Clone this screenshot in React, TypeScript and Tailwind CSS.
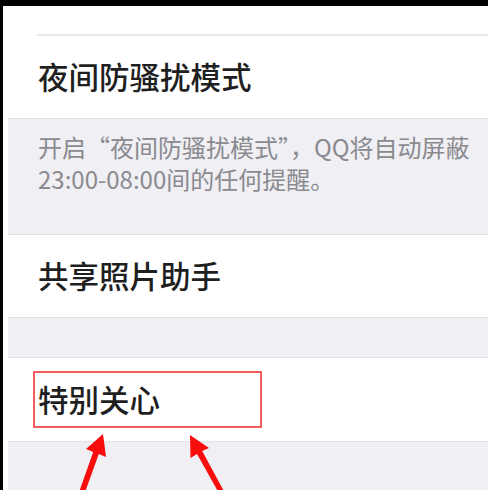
import React from "react";

const App = () => {
  return (
    <div className="relative w-[488px] h-[490px] overflow-hidden bg-black font-['Noto_Sans_CJK_SC','Noto_Sans',sans-serif]">
      <div className="mt-[6px] ml-[3px] h-[484px] bg-white flex flex-col">
        <div className="h-[28px] shrink-0" />
        <div className="ml-[34px] h-[2px] shrink-0 bg-[#e8e8ea]" />
        <div className="h-[82px] shrink-0 flex items-center pl-[35px] text-[30.5px] font-medium text-[#1f1f1f]">
          夜间防骚扰模式
        </div>

        <div className="ml-[5px] h-[117px] shrink-0 bg-[#efeff4] border-t border-b border-[#e2e2e6] pl-[30px] pt-[12px] text-[24px] leading-[32px] text-[#8a8a8f] whitespace-nowrap">
          <div>开启“夜间防骚扰模式”，QQ将自动屏蔽</div>
          <div>23:00-08:00间的任何提醒。</div>
        </div>

        <div className="h-[82px] shrink-0 flex items-center pl-[35px] text-[30.5px] font-medium text-[#1f1f1f]">
          共享照片助手
        </div>

        <div className="ml-[5px] h-[41px] shrink-0 bg-[#efeff4] border-t border-b border-[#e2e2e6]" />

        <div className="h-[83px] shrink-0 flex items-center pl-[30px]">
          <div className="w-[229px] h-[57px] border-2 border-solid border-[#f25c5c] flex items-center pl-[3px] text-[30.5px] font-medium text-[#1f1f1f]">
            特别关心
          </div>
        </div>

        <div className="ml-[5px] flex-1 bg-[#efeff4] border-t border-[#e2e2e6]" />
      </div>

      {/* annotation arrows */}
      <svg className="absolute top-0 left-0 pointer-events-none" width="488" height="490" viewBox="0 0 488 490">
        <polygon
          points="103,434 106,457 98.8,454 84,495 78,495 93.2,452 86,449"
          fill="#f80d0d"
        />
        <polygon
          points="190,435 209,448 202.2,451 226,495 220,495 197,454 190.5,458"
          fill="#f80d0d"
        />
      </svg>
    </div>
  );
};

export default App;
